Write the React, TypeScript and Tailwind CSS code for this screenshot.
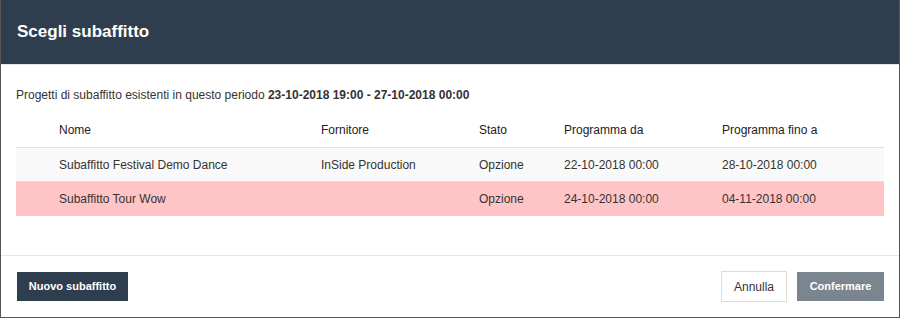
import React from "react";

const rows = [
  { nome: "Subaffitto Festival Demo Dance", forn: "InSide Production", stato: "Opzione", da: "22-10-2018 00:00", a: "28-10-2018 00:00", bg: "bg-[#f9f9f9]" },
  { nome: "Subaffitto Tour Wow", forn: "", stato: "Opzione", da: "24-10-2018 00:00", a: "04-11-2018 00:00", bg: "bg-[#ffc5c6]" },
];

const grid = "grid grid-cols-[35px_262px_158px_85px_158px_1fr]";

export default function App() {
  return (
    <div
      className="w-[900px] h-[318px] bg-white border border-t-0 border-[#555] flex flex-col text-[#333] text-[12px]"
      style={{ fontFamily: '"Liberation Sans", Arial, sans-serif' }}
    >
      <div className="h-[64px] bg-[#2f3e4e] flex items-center px-4 border-b border-[#e5e5e5] box-content">
        <h1 className="text-white font-bold text-[17px]">Scegli subaffitto</h1>
      </div>
      <div className="px-[15px] pt-[21px] flex-1">
        <p className="mb-[9px]">
          Progetti di subaffitto esistenti in questo periodo <b>23-10-2018 19:00 - 27-10-2018 00:00</b>
        </p>
        <div>
          <div className={`${grid} h-[35px] items-center border-b border-[#e0e0e0] text-[#222]`}>
            <div />
            <div className="px-2">Nome</div>
            <div className="px-2">Fornitore</div>
            <div className="px-2">Stato</div>
            <div className="px-2">Programma da</div>
            <div className="px-2">Programma fino a</div>
          </div>
          {rows.map((r, i) => (
            <div
              key={i}
              className={`${grid} h-[34px] items-center ${r.bg} ${i === 0 ? "border-b border-[#e0e0e0]" : ""}`}
            >
              <div />
              <div className="px-2">{r.nome}</div>
              <div className="px-2">{r.forn}</div>
              <div className="px-2">{r.stato}</div>
              <div className="px-2">{r.da}</div>
              <div className="px-2">{r.a}</div>
            </div>
          ))}
        </div>
      </div>
      <div className="border-t border-[#e5e5e5] h-[62px] flex items-center justify-between pl-4 pr-[15px]">
        <button className="h-[29px] w-[111px] bg-[#2f3e4e] text-white font-bold text-[11px]">Nuovo subaffitto</button>
        <div className="flex items-center gap-[10px]">
          <button className="h-[31px] w-[66px] bg-white border border-[#dcdcdc] text-[#333] text-[12px]">Annulla</button>
          <button className="h-[29px] w-[87px] bg-[#7b8590] text-white font-bold text-[11px]">Confermare</button>
        </div>
      </div>
    </div>
  );
}
